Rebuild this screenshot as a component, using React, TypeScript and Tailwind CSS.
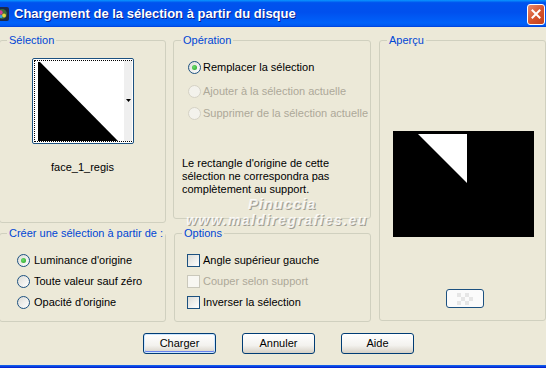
import React from "react";

// ── Small XP-style controls ────────────────────────────────────────────────
function Radio({ checked = false, disabled = false }: { checked?: boolean; disabled?: boolean }) {
  return (
    <span
      className={
        disabled
          ? "flex h-[13px] w-[13px] shrink-0 items-center justify-center rounded-full border border-[#d5d2c5] bg-[#f3f2ec]"
          : "flex h-[13px] w-[13px] shrink-0 items-center justify-center rounded-full border border-[#1c5180] bg-[linear-gradient(135deg,#dcdcd7,#ffffff)]"
      }
    >
      {checked && (
        <span className="h-[5px] w-[5px] rounded-full bg-[radial-gradient(circle_at_40%_40%,#6ddc6d,#21a121)]" />
      )}
    </span>
  );
}

function Checkbox({ disabled = false }: { disabled?: boolean }) {
  return (
    <span
      className={
        disabled
          ? "h-[13px] w-[13px] shrink-0 border border-[#cac8bb] bg-[#f8f7f2]"
          : "h-[13px] w-[13px] shrink-0 border border-[#1c5180] bg-[linear-gradient(135deg,#dcdcd7,#ffffff)]"
      }
    />
  );
}

function Group({
  label,
  className = "",
  children,
}: {
  label: string;
  className?: string;
  children?: React.ReactNode;
}) {
  return (
    <div className={`relative rounded-[3px] border border-[#d0d0bf] ${className}`}>
      <span className="absolute -top-[7px] left-[7px] whitespace-nowrap bg-[#ece9d8] px-[2px] leading-[13px] text-[#0046d5]">
        {label}
      </span>
      {children}
    </div>
  );
}

function XpButton({ label, isDefault = false }: { label: string; isDefault?: boolean }) {
  return (
    <button
      className={`flex h-[21px] w-[73px] items-center justify-center rounded-[3px] border border-[#003c74] bg-[linear-gradient(to_bottom,#ffffff,#f3f2ee_60%,#d6d0c5)] leading-none text-black ${
        isDefault ? "shadow-[inset_0_0_0_1px_#cee7ff,inset_0_-1px_0_1px_#6982ee]" : ""
      }`}
    >
      {label}
    </button>
  );
}

// ── Title bar ──────────────────────────────────────────────────────────────
function TitleBar() {
  return (
    <div className="flex h-[27px] shrink-0 items-center bg-[linear-gradient(to_bottom,#0997ff_0%,#0053ee_10%,#0050ee_45%,#0062fa_85%,#0058f0_95%,#003dd7_100%)]">
      <svg width="16" height="16" viewBox="0 0 16 16" className="-ml-[6px] shrink-0">
        <rect x="1" y="1" width="14" height="14" rx="2" fill="#1d2a4a" />
        <circle cx="8" cy="8" r="5" fill="#3b6d3b" />
        <circle cx="6.5" cy="6.5" r="2.2" fill="#d63c8f" />
        <circle cx="10" cy="9.5" r="2" fill="#e6d23a" />
        <circle cx="7" cy="10.5" r="1.5" fill="#3aa0e6" />
      </svg>
      <span className="ml-[4px] font-['Liberation_Sans',Arial,sans-serif] text-[13px] font-bold leading-none text-white [text-shadow:1px_1px_0_#0a1e8c]">
        Chargement de la sélection à partir du disque
      </span>
      <div className="flex-1" />
      <div className="mr-[1px] mt-[1px] flex h-[21px] w-[18px] items-center justify-center rounded-[3px] border border-white bg-[linear-gradient(135deg,#e98a6d,#d5532c_55%,#c2401d)]">
        <svg width="10" height="10" viewBox="0 0 10 10">
          <path d="M1.5 1.5 L8.5 8.5 M8.5 1.5 L1.5 8.5" stroke="#fff" strokeWidth="2" strokeLinecap="square" />
        </svg>
      </div>
    </div>
  );
}

// ── Dialog ─────────────────────────────────────────────────────────────────
export default function App() {
  return (
    <div className="relative flex h-[368px] w-[546px] flex-col overflow-hidden bg-[#ece9d8] font-['Liberation_Sans',Arial,sans-serif] text-[11px] text-black">
      <TitleBar />

      <div className="flex flex-1 flex-col">
        <div className="flex gap-[7px] pt-[13px]">
          {/* Left column */}
          <div className="-ml-px flex w-[167px] shrink-0 flex-col">
            <Group label="Sélection" className="h-[183px]">
              <div className="flex flex-col items-center pt-[17px]">
                <div className="h-[86px] w-[102px] rounded-[2px] border border-[#1c5180] bg-white p-px">
                  <div className="h-full w-full border border-dotted border-black">
                    <svg width="97" height="80" viewBox="0 0 97 80" className="block">
                      <rect width="97" height="80" fill="#fff" />
                      <polygon points="3,1 5,1 83,80 3,80" fill="#000" />
                      <rect x="89" y="0" width="8" height="80" fill="#efefef" />
                      <polygon points="91,38 96,38 93.5,41" fill="#000" />
                    </svg>
                  </div>
                </div>
                <span className="mt-[17px] leading-[13px]">face_1_regis</span>
              </div>
            </Group>

            <Group label="Créer une sélection à partir de :" className="mt-[10px] h-[89px]">
              <div className="flex flex-col gap-[8px] pl-[17px] pt-[20px]">
                <div className="flex items-center gap-[4px] leading-[13px]">
                  <Radio checked />
                  <span>Luminance d'origine</span>
                </div>
                <div className="flex items-center gap-[4px] leading-[13px]">
                  <Radio />
                  <span>Toute valeur sauf zéro</span>
                </div>
                <div className="flex items-center gap-[4px] leading-[13px]">
                  <Radio />
                  <span>Opacité d'origine</span>
                </div>
              </div>
            </Group>
          </div>

          {/* Middle column */}
          <div className="flex w-[198px] shrink-0 flex-col">
            <Group label="Opération" className="h-[179px]">
              <div className="flex flex-col pl-[14px] pt-[20px]">
                <div className="flex items-center gap-[2px] leading-[13px]">
                  <Radio checked />
                  <span>Remplacer la sélection</span>
                </div>
                <div className="mt-[11px] flex items-center gap-[2px] leading-[13px] text-[#aca899]">
                  <Radio disabled />
                  <span>Ajouter à la sélection actuelle</span>
                </div>
                <div className="mt-[9px] flex items-center gap-[2px] leading-[13px] text-[#aca899]">
                  <Radio disabled />
                  <span>Supprimer de la sélection actuelle</span>
                </div>
              </div>
              <p className="ml-[8px] mt-[37px] leading-[13px]">
                Le rectangle d'origine de cette
                <br />
                sélection ne correspondra pas
                <br />
                complètement au support.
              </p>
            </Group>

            <Group label="Options" className="ml-px mt-[14px] h-[89px]">
              <div className="flex flex-col gap-[8px] pl-[12px] pt-[20px]">
                <div className="flex items-center gap-[3px] leading-[13px]">
                  <Checkbox />
                  <span>Angle supérieur gauche</span>
                </div>
                <div className="flex items-center gap-[3px] leading-[13px] text-[#aca899]">
                  <Checkbox disabled />
                  <span>Couper selon support</span>
                </div>
                <div className="flex items-center gap-[3px] leading-[13px]">
                  <Checkbox />
                  <span>Inverser la sélection</span>
                </div>
              </div>
            </Group>
          </div>

          {/* Right column */}
          <Group label="Aperçu" className="ml-px h-[281px] w-[167px] shrink-0">
            <div className="flex flex-col pl-[13px] pt-[90px]">
              <svg width="141" height="106" viewBox="0 0 141 106" className="block">
                <rect width="141" height="106" fill="#000" />
                <polygon points="25,3 74,3 74,52" fill="#fff" />
              </svg>
              <div className="ml-[53px] mt-[52px] flex h-[19px] w-[38px] items-center justify-center rounded-[3px] border border-[#1c5180] bg-[#fbfbfb]">
                <svg width="24" height="12" viewBox="0 0 24 12">
                  <rect x="4" y="0" width="4" height="4" fill="#e6e6e6" />
                  <rect x="12" y="0" width="4" height="4" fill="#e6e6e6" />
                  <rect x="8" y="4" width="4" height="4" fill="#e6e6e6" />
                  <rect x="16" y="4" width="4" height="4" fill="#e6e6e6" />
                  <rect x="4" y="8" width="4" height="4" fill="#e6e6e6" />
                  <rect x="12" y="8" width="4" height="4" fill="#e6e6e6" />
                </svg>
              </div>
            </div>
          </Group>
        </div>

        {/* Buttons */}
        <div className="mt-[11px] flex pl-[143px]">
          <XpButton label="Charger" isDefault />
          <div className="ml-[26px]">
            <XpButton label="Annuler" />
          </div>
          <div className="ml-[26px]">
            <XpButton label="Aide" />
          </div>
        </div>
      </div>

      <div className="h-[3px] shrink-0 bg-[linear-gradient(to_bottom,#166aee,#0019cf)]" />

      {/* Watermark */}
      <div className="pointer-events-none absolute left-[187px] top-[196px] flex w-[180px] flex-col items-center italic font-bold leading-[16px] text-white/80 [text-shadow:1px_1px_0_#a09d92]">
        <span className="ml-[10px] text-[15px] tracking-[0.8px]">Pinuccia</span>
        <span className="text-[14px] tracking-[1.4px]">www.maldiregrafies.eu</span>
      </div>
    </div>
  );
}
